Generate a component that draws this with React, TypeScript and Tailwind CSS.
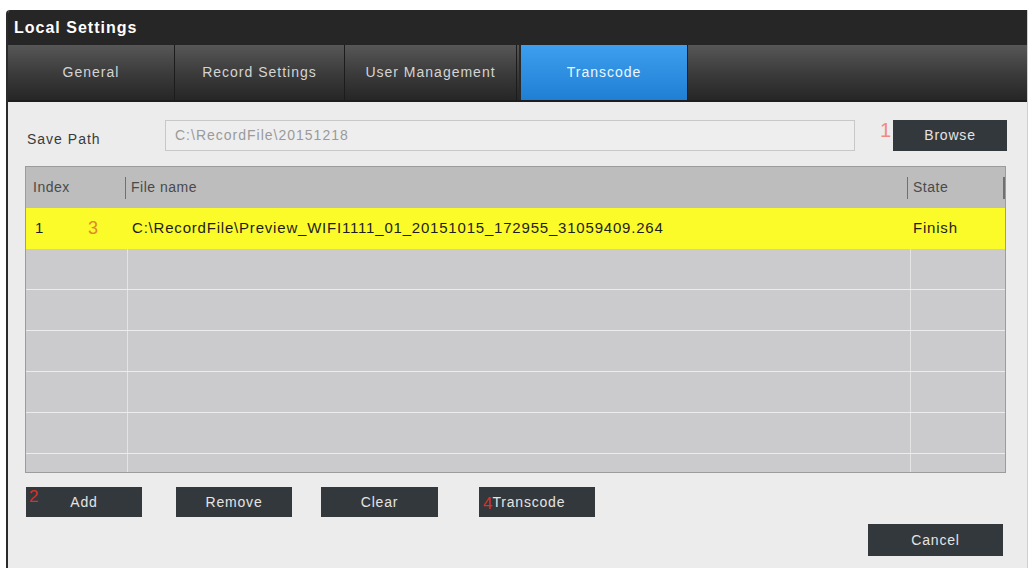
import React from 'react';

const tabs = ['General', 'Record Settings', 'User Management', 'Transcode'];
const tabWidths = ['w-[167px]', 'w-[170px]', 'w-[172px]', 'w-[168px]'];

function DarkButton({ label, mark, inlineMark, className }: { label: string; mark?: string; inlineMark?: string; className: string }) {
  return (
    <button className={`relative flex items-center justify-center bg-[#33383c] text-[#e4e4e4] text-[14px] tracking-[0.8px] ${className}`}>
      {mark && <span className="absolute left-[3px] top-[-3px] text-[#d8322a] text-[17px]">{mark}</span>}
      {inlineMark && <span className="text-[#d8322a] text-[17px] tracking-normal leading-none mt-[3px]">{inlineMark}</span>}
      {label}
    </button>
  );
}

export default function App() {
  const emptyRows = [0, 1, 2, 3, 4];

  return (
    <div className="w-[1032px] h-[568px] bg-white overflow-hidden font-['Liberation_Sans',Arial,sans-serif]">
      <div className="ml-[6px] mt-[10px] w-[1022px] h-[558px] flex flex-col bg-[#ececec] border-l-2 border-[#2b2b2b] border-r border-r-[#cfcfcf] rounded-tl-[4px] overflow-hidden">
        {/* Title bar */}
        <div className="h-[35px] bg-[#262626] flex items-center pl-[6px] shrink-0">
          <span className="text-white font-bold text-[16px] tracking-[1px]">Local Settings</span>
        </div>

        {/* Tabs */}
        <div className="h-[57px] flex shrink-0 bg-gradient-to-b from-[#575757] via-[#3c3c3c] to-[#262626] border-b-2 border-[#1e1e1e]">
          {tabs.map((t, i) => (
            <div
              key={t}
              className={`${tabWidths[i]} flex items-center justify-center text-[14px] tracking-[1px] ${
                i === 3
                  ? 'bg-gradient-to-b from-[#3d9ff0] to-[#1f7fd3] text-[#eef6ff] ml-[2px] border-l-2 border-[#2a2a2a]'
                  : 'text-[#d4d4d4] border-r border-[#1c1c1c]'
              }`}
            >
              {t}
            </div>
          ))}
          <div className="flex-1 border-l border-[#1c1c1c]" />
        </div>

        {/* Save path */}
        <div className="flex items-center mt-[18px] h-[31px] shrink-0">
          <span className="ml-[19px] w-[138px] text-[14px] tracking-[1px] text-[#3a3a3a] pt-[8px]">Save Path</span>
          <div className="w-[690px] h-[31px] border border-[#c8c8c8] bg-[#eeeeee] flex items-center pl-[9px] text-[14px] tracking-[1px] text-[#9a9a9a]">
            C:\RecordFile\20151218
          </div>
          <span className="ml-[25px] w-[13px] text-[#f08a80] text-[20px] leading-none self-start">1</span>
          <DarkButton label="Browse" className="w-[114px] h-[31px]" />
        </div>

        {/* Table */}
        <div className="ml-[17px] mt-[15px] w-[981px] h-[307px] border border-[#9c9c9c] bg-[#cbcbcd] flex flex-col overflow-hidden shrink-0">
          <div className="h-[41px] bg-[#bdbdbd] flex items-center text-[14px] tracking-[0.5px] text-[#4a4a4a] shrink-0">
            <div className="w-[99px] pl-[7px]">Index</div>
            <div className="h-[22px] w-[1px] bg-[#707070]" />
            <div className="w-[781px] pl-[5px]">File name</div>
            <div className="h-[22px] w-[1px] bg-[#707070]" />
            <div className="w-[95px] pl-[5px]">State</div>
            <div className="h-[22px] w-[2px] bg-[#707070]" />
          </div>
          <div className="h-[41px] bg-[#fbfb2a] flex items-center text-[15px] text-[#1e1e1e] shrink-0">
            <div className="w-[102px] pl-[9px] flex items-center">
              <span className="w-[53px]">1</span>
              <span className="text-[#e2862e] text-[18px]">3</span>
            </div>
            <div className="w-[783px] pl-[4px] tracking-[0.8px]">C:\RecordFile\Preview_WIFI1111_01_20151015_172955_31059409.264</div>
            <div className="flex-1 pl-[2px] tracking-[0.8px]">Finish</div>
          </div>
          {emptyRows.map((r) => (
            <div key={r} className="h-[41px] flex border-b border-[#ececec] shrink-0">
              <div className="w-[102px] border-r border-[#e4e4e4]" />
              <div className="w-[783px] border-r border-[#e4e4e4]" />
              <div className="flex-1" />
            </div>
          ))}
          <div className="flex-1 flex">
            <div className="w-[102px] border-r border-[#e4e4e4]" />
            <div className="w-[783px] border-r border-[#e4e4e4]" />
            <div className="flex-1" />
          </div>
        </div>

        {/* Action buttons */}
        <div className="flex mt-[14px] h-[30px] shrink-0">
          <DarkButton label="Add" mark="2" className="ml-[18px] w-[116px] h-[30px]" />
          <DarkButton label="Remove" className="ml-[34px] w-[116px] h-[30px]" />
          <DarkButton label="Clear" className="ml-[29px] w-[117px] h-[30px]" />
          <DarkButton label="Transcode" inlineMark="4" className="ml-[41px] w-[116px] h-[30px] !justify-start pl-[4px]" />
        </div>

        <div className="flex justify-end mt-[7px] pr-[24px] shrink-0">
          <DarkButton label="Cancel" className="w-[135px] h-[32px]" />
        </div>
      </div>
    </div>
  );
}
